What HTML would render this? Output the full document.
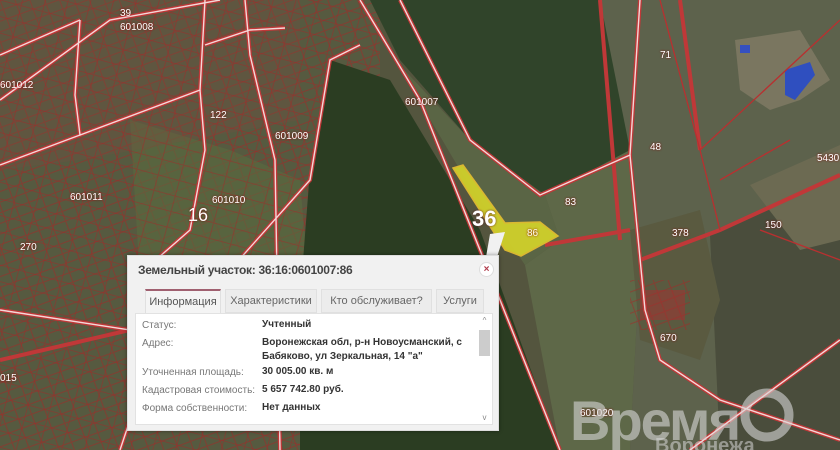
<!DOCTYPE html>
<html><head><meta charset="utf-8"><style>
*{margin:0;padding:0;box-sizing:border-box}
html,body{width:840px;height:450px;overflow:hidden}
body{position:relative;font-family:"Liberation Sans",sans-serif;background:#54553e}
svg.map{position:absolute;left:0;top:0}
.pop{position:absolute;left:127px;top:255px;width:372px;height:176px;background:#f1f1f1;border:1px solid #ddd;box-shadow:0 0 4px rgba(0,0,0,.4)}
.title{position:absolute;left:10px;top:7px;font-size:12px;font-weight:bold;color:#444;letter-spacing:-.3px}
.close{position:absolute;left:351px;top:6px;width:15px;height:15px;border-radius:50%;background:#fff;border:1px solid #ddd;color:#b03a4a;font-size:10px;font-weight:bold;text-align:center;line-height:13px}
.tab{position:absolute;top:33px;height:24px;background:#ececec;border:1px solid #e0e0e0;font-size:11px;color:#666;text-align:center;line-height:23px}
.tab.a{background:#f4f4f4;border-top:2px solid #a06070;color:#555;height:25px}
.body{position:absolute;left:7px;top:57px;width:358px;height:112px;background:#fff;border:1px solid #e2e2e2}
.r{position:absolute;font-size:10px;color:#777}
.v{position:absolute;font-size:10px;color:#333;font-weight:bold;left:126px;line-height:14px}
.sb{position:absolute;right:2px;top:2px;width:11px;height:106px}
.wm{position:absolute;left:570px;top:388px;font-size:56px;font-weight:bold;color:rgba(215,215,215,.6);letter-spacing:-2px;line-height:66px}
.wm2{position:absolute;left:655px;top:436px;font-size:20px;font-weight:bold;color:rgba(215,215,215,.55);line-height:20px}
.lbl{position:absolute;font-size:10px;color:#fff;text-shadow:0 0 2px #800}
</style></head><body>
<svg class="map" width="840" height="450" viewBox="0 0 840 450">
<defs>
<pattern id="hat" width="14" height="10" patternUnits="userSpaceOnUse" patternTransform="rotate(-20)">
<rect width="14" height="10" fill="none" stroke="#a82525" stroke-width="1.1" opacity=".5"/>
</pattern>
<pattern id="hat2" width="22" height="16" patternUnits="userSpaceOnUse" patternTransform="rotate(15)">
<rect width="22" height="16" fill="none" stroke="#a52828" stroke-width="1" opacity=".45"/>
</pattern>
</defs>
<rect x="0" y="0" width="380" height="450" fill="#565a40"/>
<rect x="0" y="0" width="380" height="450" fill="url(#hat)"/>
<polygon points="130,120 230,150 300,180 310,300 250,330 140,280" fill="#5a6a40" opacity=".6"/>
<polygon points="0,0 300,0 300,120 80,160 0,170" fill="#7a4a40" opacity=".25"/>
<rect x="0" y="0" width="380" height="450" fill="url(#hat2)"/>
<polygon points="310,170 330,60 390,80 480,230 560,450 300,450 300,300" fill="#2b3d22"/>
<polygon points="370,0 625,0 630,155 545,195 470,140 400,60" fill="#30442a"/>
<polygon points="395,60 470,140 545,195 560,240 525,265 460,170" fill="#5a6545"/>
<polygon points="545,195 630,150 640,260 630,450 560,450 525,265 560,240" fill="#5e6848"/>
<polygon points="600,0 840,0 840,450 630,450 640,260 630,150" fill="#5d624c"/>
<polygon points="710,235 840,170 840,450 720,450" fill="#4a4d3c"/>
<polygon points="750,185 840,145 840,240 800,250" fill="#6c6a52"/>
<polygon points="735,40 800,30 830,80 800,100 770,110 740,90" fill="#7a7660"/>
<polygon points="785,70 810,62 815,75 795,100 785,95" fill="#2f4fbf"/>
<rect x="740" y="45" width="10" height="8" fill="#3550c0"/>
<polygon points="630,230 700,210 720,300 700,360 640,340" fill="#5a5a40"/>
<rect x="630" y="280" width="60" height="50" fill="url(#hat)"/>
<rect x="640" y="290" width="45" height="30" fill="#a53030" opacity=".5"/>
<g fill="none" stroke="#c03838" stroke-width="4">
<path d="M0,100 L110,20 L220,0"/><path d="M0,55 L80,20"/>
<path d="M80,20 L75,95 L80,135 L200,90 L205,0"/>
<path d="M0,165 L80,135"/>
<path d="M205,45 L250,30 L285,28"/><path d="M245,0 L250,55 L275,160 L280,450"/>
<path d="M200,90 L205,150 L190,230 L150,265 L130,330 L0,310"/>
<path d="M120,450 L150,360 L310,180 L330,60 L360,45"/>
<path d="M360,0 L420,100 L560,450"/>
<path d="M400,0 L470,140 L540,195 L630,155 L640,0"/>
<path d="M630,155 L645,310 L660,360 L720,400 L840,440"/>
<path d="M640,260 L720,230 L840,175"/>
<path d="M545,245 L630,230"/>
<path d="M600,0 L620,240"/>
<path d="M680,0 L700,150"/>
<path d="M130,330 L0,360"/>
<path d="M690,450 L840,340"/>
</g>
<g fill="none" stroke="#f3d8d8" stroke-width="1.4">
<path d="M0,100 L110,20 L220,0"/><path d="M0,55 L80,20"/>
<path d="M80,20 L75,95 L80,135 L200,90 L205,0"/>
<path d="M0,165 L80,135"/>
<path d="M205,45 L250,30 L285,28"/><path d="M245,0 L250,55 L275,160 L280,450"/>
<path d="M200,90 L205,150 L190,230 L150,265 L130,330 L0,310"/>
<path d="M120,450 L150,360 L310,180 L330,60 L360,45"/>
<path d="M360,0 L420,100 L560,450"/>
<path d="M400,0 L470,140 L540,195 L630,155 L640,0"/>
<path d="M630,155 L645,310 L660,360 L720,400 L840,440"/>
<path d="M690,450 L840,340"/>
</g>
<g fill="none" stroke="#b83030" stroke-width="1.3">
<path d="M700,150 L840,20"/><path d="M660,0 L700,150 L720,230"/>
<path d="M760,230 L840,260"/><path d="M720,180 L790,140"/>
</g>
<polygon points="453,168 463,165 505,223 540,222 558,236 521,256 505,250" fill="#d6d62a" stroke="#e8c030" stroke-width="1.5" opacity=".9"/>
<polygon points="490,234 505,232 497,257 486,257" fill="#f1f1f1"/>
<circle cx="767" cy="415" r="22" fill="none" stroke="rgba(215,215,215,.6)" stroke-width="9"/>
</svg>
<div class="lbl" style="left:120px;top:8px">39</div>
<div class="lbl" style="left:120px;top:22px">601008</div>
<div class="lbl" style="left:0;top:80px">601012</div>
<div class="lbl" style="left:70px;top:192px">601011</div>
<div class="lbl" style="left:212px;top:195px">601010</div>
<div class="lbl" style="left:275px;top:131px">601009</div>
<div class="lbl" style="left:405px;top:97px">601007</div>
<div class="lbl" style="left:210px;top:110px">122</div>
<div class="lbl" style="left:20px;top:242px">270</div>
<div class="lbl" style="left:0;top:373px">015</div>
<div class="lbl" style="left:580px;top:408px">601020</div>
<div class="lbl" style="left:650px;top:142px">48</div>
<div class="lbl" style="left:660px;top:50px">71</div>
<div class="lbl" style="left:765px;top:220px">150</div>
<div class="lbl" style="left:672px;top:228px">378</div>
<div class="lbl" style="left:660px;top:333px">670</div>
<div class="lbl" style="left:565px;top:197px">83</div>
<div class="lbl" style="left:527px;top:228px;color:#ffe">86</div>
<div class="lbl" style="left:817px;top:153px">5430</div>
<div class="lbl" style="left:188px;top:205px;font-size:18px">16</div>
<div class="lbl" style="left:472px;top:206px;font-size:22px;font-weight:bold;text-shadow:0 0 2px #622">36</div>
<div class="wm">Время</div>
<div class="wm2">Воронежа</div>
<div class="pop">
<div class="title">Земельный участок: 36:16:0601007:86</div>
<div class="close">×</div>
<div class="tab a" style="left:17px;width:76px">Информация</div>
<div class="tab" style="left:97px;width:92px">Характеристики</div>
<div class="tab" style="left:193px;width:111px">Кто обслуживает?</div>
<div class="tab" style="left:308px;width:48px">Услуги</div>
<div class="body">
<div class="r" style="left:6px;top:6px">Статус:</div><div class="v" style="top:4px">Учтенный</div>
<div class="r" style="left:6px;top:24px">Адрес:</div><div class="v" style="top:22px">Воронежская обл, р-н Новоусманский, с<br>Бабяково, ул Зеркальная, 14 "а"</div>
<div class="r" style="left:6px;top:53px">Уточненная площадь:</div><div class="v" style="top:51px">30 005.00 кв. м</div>
<div class="r" style="left:6px;top:71px">Кадастровая стоимость:</div><div class="v" style="top:69px">5 657 742.80 руб.</div>
<div class="r" style="left:6px;top:89px">Форма собственности:</div><div class="v" style="top:87px">Нет данных</div>
<div class="sb"><div style="font-size:8px;color:#888;text-align:center">^</div><div style="position:absolute;top:14px;width:11px;height:26px;background:#ccc"></div><div style="position:absolute;bottom:0;width:11px;font-size:8px;color:#888;text-align:center">v</div></div>
</div>
</div>
</body></html>
